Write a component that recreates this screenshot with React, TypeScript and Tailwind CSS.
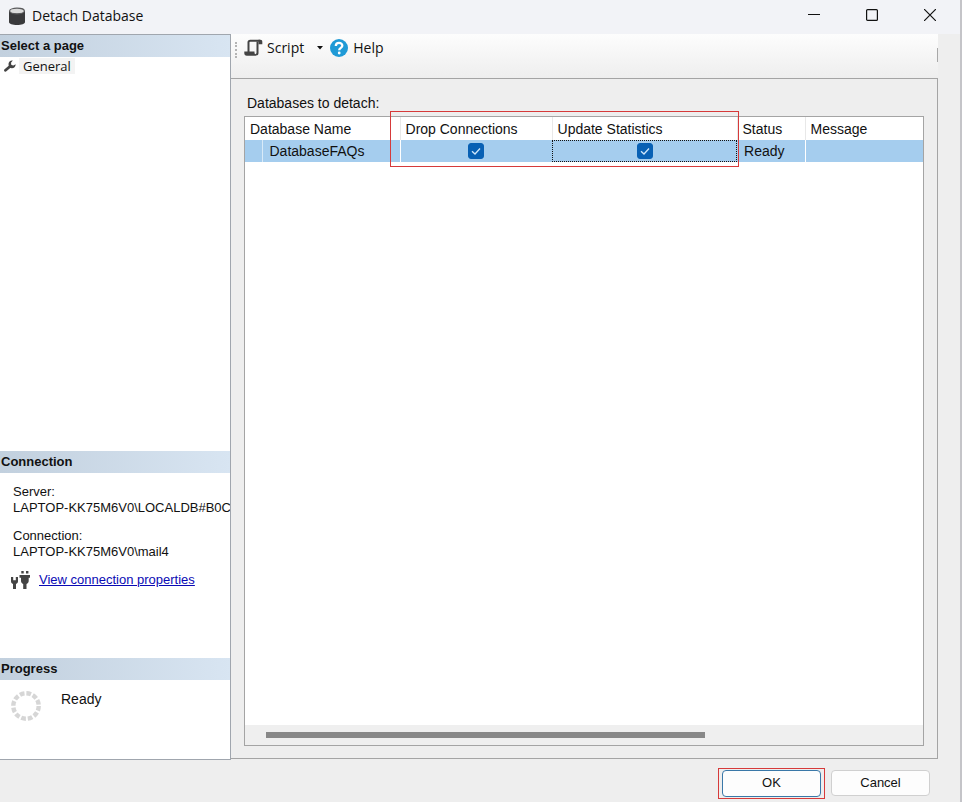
import { useState } from "react";

function DatabaseIcon() {
  return (
    <svg width="18" height="20" viewBox="0 0 18 20" aria-hidden="true">
      <path d="M1 4v11c0 2 3.500 3 8 3s8-1 8-3V4z" fill="#3a3a3c" />
      <ellipse cx="9" cy="4" rx="7.400" ry="2.800" fill="#dcdcdc" stroke="#5a5a5c" strokeWidth="1.200" />
    </svg>
  );
}

function WrenchIcon() {
  return (
    <svg width="12" height="12" viewBox="0 0 12 12" aria-hidden="true">
      <path d="M1.500 10.300 6.500 6" stroke="#444" strokeWidth="2.800" strokeLinecap="round" />
      <path d="M8.800.5A3.600 3.600 0 0 0 4.600 4.800 3.500 3.500 0 0 0 8 8.200c2 0 3.500-1.400 3.700-3.900L9.400 5.400 7.300 4.900 7 2.700z" fill="#444" />
    </svg>
  );
}

function ScriptIcon() {
  return (
    <svg width="19" height="18" viewBox="0 0 19 18" fill="none" aria-hidden="true">
      <path d="M4.500 13V3.300C4.500 2 5.200 1.700 6.300 1.700H16" stroke="#444" strokeWidth="2" />
      <path d="M13.500 2.500V14c0 1-.5 1.500-1.500 1.500" stroke="#444" strokeWidth="2" />
      <path d="M14.500.7h2c1.200 0 1.800.8 1.800 2v2.500h-3.800z" fill="#444" />
      <path d="M.3 12.500h10.200v1.300c0 1 .7 1.400 1.500 1.400v1.500H2.800c-1.600 0-2.500-.9-2.500-2.500z" fill="#444" />
    </svg>
  );
}

function HelpIcon() {
  return (
    <svg width="18" height="18" viewBox="0 0 18 18" aria-hidden="true">
      <circle cx="9" cy="9" r="9" fill="#1f9ad6" />
      <path d="M5.800 7c0-4.200 6.500-4 6.500-.3 0 2.200-3.100 2.200-3.100 4.600" fill="none" stroke="#fff" strokeWidth="2.300" />
      <circle cx="9.200" cy="14" r="1.400" fill="#fff" />
    </svg>
  );
}

function PlugIcon() {
  return (
    <svg width="19" height="19" viewBox="0 0 19 19" fill="#444" aria-hidden="true">
      <path d="M0 7h2.200v3.200h2.600V7H7v4.200c0 1.500-.8 2.300-2 2.800V19H2v-5c-1.200-.5-2-1.300-2-2.800z" />
      <path d="M10.300 1h2.400v2.500h-2.400zM15 1h2.400v2.500H15zM8.500 5H19v2.800h-1.300v3c0 1.700-.9 2.600-2.200 3.200v5h-3.300v-5c-1.300-.6-2.200-1.500-2.200-3.200v-3H8.500z" />
    </svg>
  );
}

function Spinner() {
  return (
    <svg width="30" height="30" viewBox="0 0 30 30" aria-hidden="true">
      <circle cx="15" cy="15" r="12.700" fill="none" stroke="#d6d6d6" strokeWidth="4.400" strokeDasharray="4.700 1.950" />
    </svg>
  );
}

function SectionTitle({ children }: { children: string }) {
  return (
    <h2 className="h-[22px] shrink-0 bg-linear-to-r from-[#c2d0de] to-[#d8e5f2] px-px text-[13px] leading-[22px] font-bold">
      {children}
    </h2>
  );
}

function Check({ label, checked, onChange }: { label: string; checked: boolean; onChange: () => void }) {
  return (
    <label className="relative mx-auto block size-4">
      <input
        type="checkbox"
        aria-label={label}
        checked={checked}
        onChange={onChange}
        className="block size-4 appearance-none rounded-[3px] border border-[#0860b4] bg-white checked:bg-[#0860b4]"
      />
      {checked && (
        <svg className="pointer-events-none absolute inset-0" width="16" height="16" viewBox="0 0 16 16" aria-hidden="true">
          <path d="M4 8.200 7 11l5-5.500" fill="none" stroke="#cfe6fa" strokeWidth="1.300" />
        </svg>
      )}
    </label>
  );
}

export default function App() {
  const [drop, setDrop] = useState(true);
  const [update, setUpdate] = useState(true);

  return (
    <div className="flex h-screen flex-col border-r-2 border-[#c4c4c8] bg-[#eeeeee] font-['Liberation_Sans',Arial,sans-serif] text-[13px] text-[#111]">
      <header className="flex h-[34px] shrink-0 items-center bg-[#f2f3f7] pl-2 font-['Open_Sans',sans-serif]">
        <DatabaseIcon />
        <h1 className="ml-1.5 grow pb-0.5 text-sm">Detach Database</h1>
        <div className="flex h-full items-center pr-px pb-1">
          <button aria-label="Minimize" className="flex w-[58px] justify-center">
            <svg width="12" height="12" viewBox="0 0 12 12"><path d="M0 5.500h12" stroke="#111" /></svg>
          </button>
          <button aria-label="Maximize" className="flex w-[58px] justify-center">
            <svg width="12" height="12" viewBox="0 0 12 12"><rect x=".6" y=".6" width="10.800" height="10.800" rx="1" fill="none" stroke="#111" strokeWidth="1.200" /></svg>
          </button>
          <button aria-label="Close" className="flex w-[58px] justify-center">
            <svg width="12" height="12" viewBox="0 0 12 12"><path d="m0 0 12 12M12 0 0 12" stroke="#111" strokeWidth="1.200" /></svg>
          </button>
        </div>
      </header>

      <div className="flex min-h-0 grow">
        <aside className="flex w-[231px] shrink-0 flex-col border border-l-0 border-[#a0a6ae] bg-white">
          <SectionTitle>Select a page</SectionTitle>
          <nav className="grow">
            <a href="#general" className="flex items-center gap-[3px] pt-px pl-1">
              <WrenchIcon />
              <span className="bg-[#f3f3f3] px-1 leading-4 font-['Open_Sans',sans-serif]">General</span>
            </a>
          </nav>

          <SectionTitle>Connection</SectionTitle>
          <div className="flex h-[185px] shrink-0 flex-col overflow-hidden pt-[11px] pl-[13px] leading-4 whitespace-nowrap">
            <p>Server:</p>
            <p>LAPTOP-KK75M6V0\LOCALDB#B0C</p>
            <p className="mt-3">Connection:</p>
            <p>LAPTOP-KK75M6V0\mail4</p>
            <div className="-ml-0.5 mt-2.5 flex items-center gap-[9px]">
              <PlugIcon />
              <a href="#properties" className="text-[#0a0ab4] underline">View connection properties</a>
            </div>
          </div>

          <SectionTitle>Progress</SectionTitle>
          <div className="flex h-[79px] shrink-0 gap-5 pt-[11px] pl-[11px]">
            <Spinner />
            <p className="text-sm leading-4">Ready</p>
          </div>
        </aside>

        <main className="mr-[22px] mb-px flex min-w-0 grow flex-col">
          <div className="flex h-11 shrink-0 items-start bg-linear-to-b from-[#fdfdfd] to-[#eeeeee] pt-1 pl-1 font-['Open_Sans',sans-serif] text-sm">
            <span className="mt-1 h-4 border-l-2 border-dotted border-[#b4b4b4]" />
            <button className="ml-[7px] flex items-center gap-1">
              <ScriptIcon />
              Script
            </button>
            <button aria-label="Script options" className="flex h-5 w-[26px] items-center justify-end pr-[7px]">
              <svg width="6" height="4" viewBox="0 0 6 4"><path d="M0 0h6L3 3.500z" fill="#111" /></svg>
            </button>
            <button className="flex items-center gap-[5px]">
              <HelpIcon />
              Help
            </button>
            <span className="mt-2.5 ml-auto h-3.5 w-px bg-[#a8a8a8]" />
          </div>

          <section className="flex min-h-0 grow flex-col border border-l-0 border-[#a4a4a4] px-[13px] pt-4 pb-3">
            <h2 className="mb-1 pl-[3px] text-sm leading-[17px]">Databases to detach:</h2>
            <div className="relative flex min-h-0 grow flex-col border border-[#a4a4a4] bg-white">
              <table className="w-full table-fixed border-collapse text-left text-sm">
                <colgroup>
                  <col className="w-[17px]" />
                  <col className="w-[138px]" />
                  <col className="w-[152px]" />
                  <col className="w-[185px]" />
                  <col className="w-[68px]" />
                  <col />
                </colgroup>
                <thead>
                  <tr className="h-[23px]">
                    <th colSpan={2} className="border-r border-[#e8e8e8] pl-[5px] font-normal">Database Name</th>
                    <th className="border-r border-[#e8e8e8] pl-[5px] font-normal">Drop Connections</th>
                    <th className="border-r border-[#e8e8e8] pl-[5px] font-normal">Update Statistics</th>
                    <th className="border-r border-[#e8e8e8] pl-[5px] font-normal">Status</th>
                    <th className="pl-[5px] font-normal">Message</th>
                  </tr>
                </thead>
                <tbody>
                  <tr className="h-[22px] bg-[#a5cdee]">
                    <td className="border-r border-[#d8eaf8]" />
                    <td className="border-r border-white pl-[7px]">DatabaseFAQs</td>
                    <td>
                      <Check label="Drop Connections" checked={drop} onChange={() => setDrop(!drop)} />
                    </td>
                    <td className="outline-1 -outline-offset-1 outline-dotted outline-[#111]">
                      <Check label="Update Statistics" checked={update} onChange={() => setUpdate(!update)} />
                    </td>
                    <td className="border-r border-white pl-[7px]">Ready</td>
                    <td />
                  </tr>
                </tbody>
              </table>
              <div className="pointer-events-none absolute -top-1.5 left-[145px] h-14 w-[349px] border border-[#d63a3a]" />
              <div className="mt-auto flex h-5 items-center bg-[#efefef] px-[21px]">
                <div className="h-1.5 w-[69%] bg-[#888]" />
              </div>
            </div>
          </section>
        </main>
      </div>

      <footer className="flex h-[42px] shrink-0 items-center justify-end gap-[6px] pt-1 pr-[30px]">
        <div className="border border-[#d63a3a] px-[3px] py-px">
          <button className="block h-[27px] w-[99px] rounded-[4px] border border-[#3a78a8] bg-[#fdfdfd]">OK</button>
        </div>
        <button className="h-[26px] w-[99px] rounded-[4px] border border-[#d0d0d0] bg-[#fdfdfd]">Cancel</button>
      </footer>
    </div>
  );
}
